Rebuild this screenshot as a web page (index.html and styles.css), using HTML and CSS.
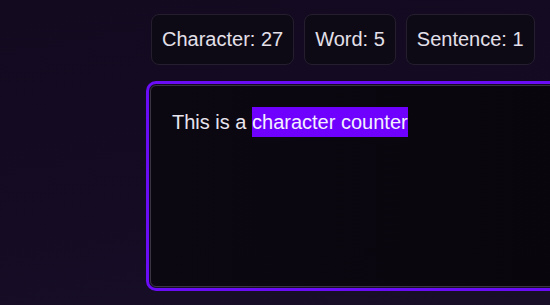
FILE: index.html
```html
<!DOCTYPE html>
<html lang="en">
<head>
<meta charset="utf-8">
<title>Character Counter</title>
<link rel="stylesheet" href="styles.css">
</head>
<body>
<main class="app">
  <div class="stats">
    <div class="stat">Character: 27</div>
    <div class="stat">Word: 5</div>
    <div class="stat">Sentence: 1</div>
  </div>
  <div class="editor">
    <div class="line">This is a <span class="sel">character counter</span></div>
  </div>
</main>
</body>
</html>
```
FILE: styles.css
```css
html, body {
  margin: 0;
  padding: 0;
  height: 100%;
  overflow: hidden;
}
body {
  background: linear-gradient(170deg, #130a20 0%, #150c24 60%, #180e28 100%);
  font-family: "Liberation Sans", Arial, sans-serif;
  color: #e6e2ec;
}
.app {
  box-sizing: border-box;
  width: 550px;
  height: 305px;
  padding: 14px 0 0 150px;
  overflow: hidden;
}
.stats {
  display: flex;
  gap: 10px;
  padding-left: 1px;
}
.stat {
  flex: none;
  padding: 13px 10px;
  font-size: 20px;
  line-height: 23px;
  border: 1px solid #241e2e;
  border-radius: 8px;
  background: #0e0a15;
  color: #e4e0ea;
}
.editor {
  box-sizing: border-box;
  margin-top: 20px;
  width: 430px;
  height: 202px;
  padding: 21px;
  border: 1px solid #3a3344;
  border-radius: 6px;
  background: linear-gradient(90deg, #0c0812 0%, #08050c 100%);
  outline: 3px solid #6a0cf5;
  outline-offset: 1px;
}
.line {
  font-size: 20px;
  line-height: 30px;
  color: #e8e4ee;
  white-space: nowrap;
}
.sel {
  display: inline-block;
  background: #6f00ff;
  color: #f4f0ff;
  line-height: 30px;
}
```
